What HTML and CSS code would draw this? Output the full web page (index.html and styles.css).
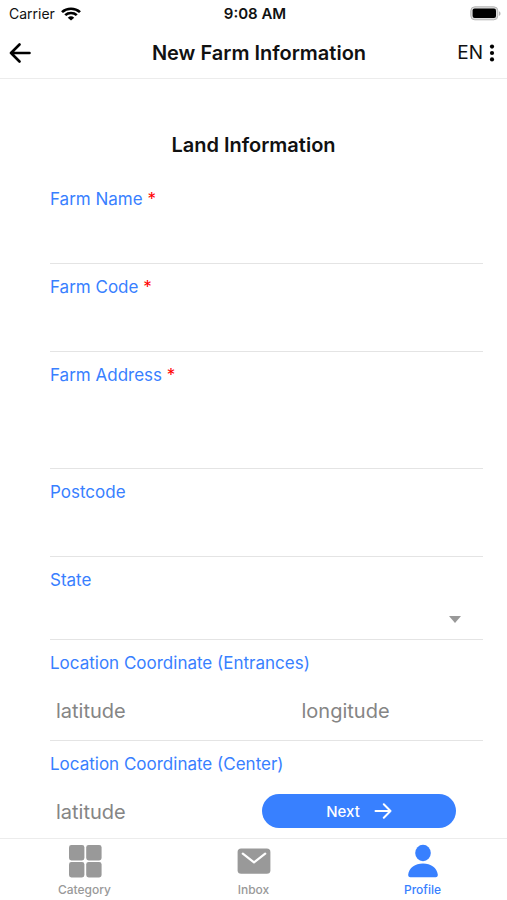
FILE: index.html
```html
<!DOCTYPE html>
<html lang="en">
<head>
  <meta charset="UTF-8">
  <meta name="viewport" content="width=device-width, initial-scale=1">
  <title>New Farm Information</title>
  <link rel="stylesheet" href="styles.css">
</head>
<body>
  <div class="status-bar">
    <div class="carrier">
      <span>Carrier</span>
      <svg width="20" height="14" viewBox="0 0 18 14" preserveAspectRatio="none" fill="none" stroke="#000" stroke-width="2.4">
        <path d="M0.9 5.1a11.6 11.6 0 0 1 16.2 0"/>
        <path d="M3.8 8.2a7.4 7.4 0 0 1 10.4 0"/>
        <path d="M9 13.6L6.1 10.7a4.1 4.1 0 0 1 5.8 0z" fill="#000" stroke="none"/>
      </svg>
    </div>
    <span class="time">9:08 AM</span>
    <div class="battery">
      <svg width="31" height="15" viewBox="0 0 31 15">
        <rect x="0.8" y="0.8" width="27" height="13" rx="4" fill="#ddd" stroke="#b4b4b4" stroke-width="1"/>
        <rect x="2.6" y="2.6" width="23.4" height="9.4" rx="2" fill="#000"/>
        <path d="M29 5.2c2 0.8 2 3.8 0 4.6z" fill="#b4b4b4"/>
      </svg>
    </div>
  </div>

  <header class="header">
    <button class="icon-button" type="button" aria-label="Back">
      <svg width="22" height="20" viewBox="0 0 22 20" fill="none" stroke="#000" stroke-width="2.6" stroke-linecap="round" stroke-linejoin="round">
        <path d="M20.500 10H2M10.500 1.500L2 10l8.500 8.500"/>
      </svg>
    </button>
    <h1>New Farm Information</h1>
    <button class="language" type="button" aria-label="Language">
      <span>EN</span>
      <svg width="6" height="18" viewBox="0 0 6 18">
        <circle cx="3" cy="2.6" r="2.1"/>
        <circle cx="3" cy="9" r="2.1"/>
        <circle cx="3" cy="15.4" r="2.1"/>
      </svg>
    </button>
  </header>

  <div class="content">
    <form class="form" id="farm-form">
      <h2>Land Information</h2>

      <div class="field">
        <label for="farm-name">Farm Name <span class="required">*</span></label>
        <input id="farm-name" type="text" required>
      </div>
      <div class="field">
        <label for="farm-code">Farm Code <span class="required">*</span></label>
        <input id="farm-code" type="text" required>
      </div>
      <div class="field">
        <label for="farm-address">Farm Address <span class="required">*</span></label>
        <textarea id="farm-address" required></textarea>
      </div>
      <div class="field">
        <label for="postcode">Postcode</label>
        <input id="postcode" type="text">
      </div>
      <div class="field">
        <label for="state">State</label>
        <div class="select-box">
          <select id="state">
            <option value=""></option>
          </select>
          <svg width="12" height="7" viewBox="0 0 12 7"><path d="M0 0h12L6 7z" fill="#999"/></svg>
        </div>
      </div>
      <div class="field">
        <label for="entrance-lat">Location Coordinate (Entrances)</label>
        <div class="coordinates">
          <input id="entrance-lat" type="text" placeholder="latitude">
          <input type="text" placeholder="longitude" aria-label="Entrances longitude">
        </div>
      </div>
      <div class="field">
        <label for="center-lat">Location Coordinate (Center)</label>
        <div class="coordinates">
          <input id="center-lat" type="text" placeholder="latitude">
          <input type="text" placeholder="longitude" aria-label="Center longitude">
        </div>
      </div>
    </form>

    <button class="next" type="submit" form="farm-form">
      <span>Next</span>
      <svg width="18" height="16" viewBox="0 0 18 16" fill="none" stroke="#fff" stroke-width="2" stroke-linecap="round" stroke-linejoin="round">
        <path d="M1.5 8h15M9.8 1.3L16.5 8l-6.7 6.7"/>
      </svg>
    </button>
  </div>

  <nav class="tabs">
    <a class="tab" href="#category">
      <svg width="34" height="34" viewBox="0 0 34 34" fill="#999">
        <rect x="1" y="1" width="15.4" height="15.4" rx="2.4"/>
        <rect x="18.2" y="1" width="15.4" height="15.4" rx="2.4"/>
        <rect x="1" y="18" width="15.4" height="15.4" rx="2.4"/>
        <rect x="18.2" y="18" width="15.4" height="15.4" rx="2.4"/>
      </svg>
      <span>Category</span>
    </a>
    <a class="tab" href="#inbox">
      <svg width="34" height="34" viewBox="0 0 34 34">
        <rect x="0.6" y="4.4" width="32.8" height="25.4" rx="3.6" fill="#999"/>
        <path d="M5.8 9.6L17 18.4l11.2-8.8" fill="none" stroke="#fff" stroke-width="2.2" stroke-linecap="round" stroke-linejoin="round"/>
      </svg>
      <span>Inbox</span>
    </a>
    <a class="tab active" href="#profile">
      <svg width="34" height="34" viewBox="0 0 34 34" fill="#3880ff">
        <ellipse cx="17" cy="9" rx="7.8" ry="8.2"/>
        <path d="M4.4 33.2C2.8 33.2 2 32.2 2.2 30.6C3 23.6 9.2 19.4 17 19.4s14 4.2 14.8 11.2c0.2 1.6-0.6 2.6-2.2 2.6z"/>
      </svg>
      <span>Profile</span>
    </a>
  </nav>
</body>
</html>
```

FILE: styles.css
```css
* {
  box-sizing: border-box;
}

body {
  margin: 0;
  height: 100vh;
  display: flex;
  flex-direction: column;
  font-family: Inter, "Liberation Sans", sans-serif;
  background: #fff;
  color: #111;
}

button,
input,
textarea,
select {
  font-family: inherit;
  border: none;
  background: none;
  padding: 0;
  margin: 0;
  outline: none;
}

svg {
  display: block;
}

.status-bar {
  display: grid;
  grid-template-columns: 1fr auto 1fr;
  align-items: center;
  height: 27px;
  padding: 0 6px 0 9px;
  font-size: 14px;
}

.carrier {
  display: flex;
  align-items: center;
  gap: 6px;
}

.time {
  font-size: 15px;
  font-weight: 600;
}

.battery {
  justify-self: end;
}

.header {
  display: grid;
  grid-template-columns: 1fr auto 1fr;
  align-items: center;
  height: 52px;
  padding: 0 12px 0 9px;
  border-bottom: 1px solid #ececec;
}

.header h1 {
  margin: 0 0 0 14px;
  font-size: 20px;
  font-weight: 600;
}

.icon-button {
  justify-self: start;
  cursor: pointer;
}

.language {
  justify-self: end;
  display: flex;
  align-items: center;
  gap: 6px;
  font-size: 19px;
  color: #111;
  cursor: pointer;
}

.content {
  position: relative;
  flex: 1;
  min-height: 0;
}

.form {
  height: 100%;
  overflow-y: auto;
  scrollbar-width: none;
  padding: 0 24px 0 50px;
}

.form h2 {
  margin: 54px 26px 19px 0;
  font-size: 20px;
  line-height: 24px;
  font-weight: 600;
  text-align: center;
}

.field {
  display: flex;
  flex-direction: column;
  padding-top: 11px;
  border-bottom: 1px solid #e4e4e4;
}

.field label {
  font-size: 17px;
  line-height: 24px;
  color: #3880ff;
}

.required {
  color: #f00;
}

.field input,
.field textarea {
  width: 100%;
  height: 52px;
  padding: 0 6px;
  font-size: 20px;
  color: #111;
}

.field textarea {
  height: 81px;
  resize: none;
}

.field input::placeholder {
  color: #858585;
  opacity: 1;
}

.select-box {
  display: grid;
  align-items: center;
}

.select-box select,
.select-box svg {
  grid-area: 1 / 1;
}

.select-box select {
  width: 100%;
  height: 47px;
  font-size: 20px;
  appearance: none;
}

.select-box svg {
  justify-self: end;
  margin-right: 22px;
  margin-top: 8px;
  pointer-events: none;
}

.coordinates {
  display: grid;
  grid-template-columns: 1fr 1fr;
  gap: 58px;
  padding-top: 7px;
}

.coordinates input {
  height: 58px;
}

/* floats over the scrolling form */
.next {
  position: absolute;
  right: 51px;
  bottom: 10px;
  width: 194px;
  height: 34px;
  display: flex;
  align-items: center;
  justify-content: center;
  gap: 14px;
  border-radius: 17px;
  background: #3880ff;
  color: #fff;
  font-size: 15px;
  font-weight: 500;
  cursor: pointer;
}

.tabs {
  display: grid;
  grid-template-columns: repeat(3, 1fr);
  height: 62px;
  padding-top: 5px;
  border-top: 1px solid #ececec;
}

.tab {
  display: flex;
  flex-direction: column;
  align-items: center;
  gap: 4px;
  font-size: 12px;
  line-height: 16px;
  font-weight: 500;
  color: #999;
  text-decoration: none;
}

.tab.active {
  color: #3880ff;
}
```
